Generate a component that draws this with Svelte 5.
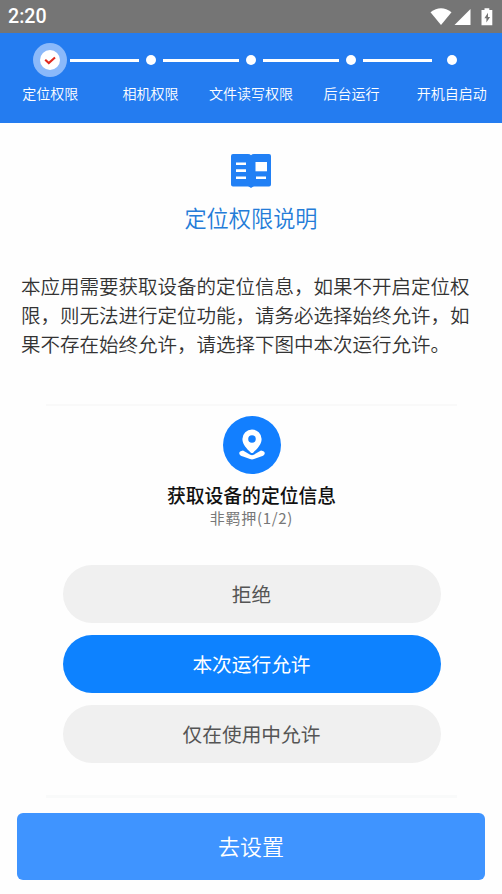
<script>
  const steps = ['定位权限', '相机权限', '文件读写权限', '后台运行', '开机自启动'];
  const choices = ['拒绝', '本次运行允许', '仅在使用中允许'];

  let current = 0;
  let recommended = 1;
</script>

<div class="screen">
  <div class="status-bar">
    <span class="clock">2:20</span>
    <svg class="status-icons" width="66" height="20" viewBox="0 0 66 20">
      <path d="M0.5 4.2Q11 -3.8 21.5 4.2L11 17Z" fill="#fff" />
      <path d="M40.5 1V17H24.5Z" fill="#fff" />
      <path d="M54.5 0.2h4.8v1.7h3v15.3H51.5V1.9h3z" fill="#fff" />
      <path d="M58 4.8l-3.6 5.5h2v4.3l3.7-5.7h-2.1z" fill="#757575" />
    </svg>
  </div>

  <div class="steps">
    {#each steps as step, i}
      <div class="step">
        <div class="track">
          <span class="line" class:hidden={i === 0}></span>
          <span class="marker" class:end={i === 0 || i === steps.length - 1}>
            {#if i === current}
              <svg class="current" width="34" height="34" viewBox="0 0 34 34">
                <circle cx="17" cy="17" r="17" fill="#8bb9fa" />
                <circle cx="17" cy="17" r="10" fill="#fff" />
                <path d="M12.2 16.7l3.6 3.4 6.2-5.6" fill="none" stroke="#e02b20" stroke-width="2.1" />
              </svg>
            {:else}
              <span class="dot"></span>
            {/if}
          </span>
          <span class="line" class:hidden={i === steps.length - 1}></span>
        </div>
        <div class="step-label">{step}</div>
      </div>
    {/each}
  </div>

  <main>
    <svg class="book" width="40" height="36" viewBox="0 0 40 36">
      <path d="M2 1H17Q19 1 20 2.3Q21 1 23 1H38Q40 1 40 3V31.5Q40 33.5 38 33.5H23Q21.5 33.5 20 35Q18.5 33.5 17 33.5H2Q0 33.5 0 31.5V3Q0 1 2 1Z" fill="#2180f5" />
      <path d="M5 10.7h10M5 17.6h10M5 24.8h10M25 24.8h10" stroke="#fff" stroke-width="2.6" />
      <rect x="24.5" y="9" width="11.5" height="9.3" fill="#fff" />
    </svg>
    <h1>定位权限说明</h1>
    <p class="description">本应用需要获取设备的定位信息，如果不开启定位权限，则无法进行定位功能，请务必选择始终允许，如果不存在始终允许，请选择下图中本次运行允许。</p>

    <div class="sample">
      <svg class="pin" width="58" height="58" viewBox="0 0 58 58">
        <circle cx="29" cy="29" r="29" fill="#127fff" />
        <path d="M20 34.5C14.5 35.3 15.5 39.5 20 40.5L27 43Q29 43.8 31 43L38 40.5C42.5 39.5 43.5 35.3 38 34.5L30.8 38.7Q29 39.6 27.2 38.7Z" fill="#fff" />
        <path fill-rule="evenodd" d="M29 13.5A9.6 9.6 0 0 0 19.4 23C19.4 28.5 24 33 27.6 36.4Q29 37.6 30.4 36.4C34 33 38.6 28.5 38.6 23A9.6 9.6 0 0 0 29 13.5ZM29 19.2a3.8 3.8 0 1 1 0 7.6a3.8 3.8 0 1 1 0-7.6Z" fill="#fff" />
      </svg>
      <h2>获取设备的定位信息</h2>
      <div class="app-name">非羁押(1/2)</div>
      <div class="choices">
        {#each choices as choice, i}
          <div class="choice" class:active={i === recommended}>{choice}</div>
        {/each}
      </div>
    </div>

    <button>去设置</button>
  </main>
</div>

<style>
  :global(body) { background: #fff; }
  .screen { height: 894px; overflow: hidden; display: flex; flex-direction: column; background: #fefefe; font-family: 'Noto Sans CJK SC', sans-serif; font-weight: 350; }

  .status-bar { height: 33px; flex-shrink: 0; box-sizing: border-box; padding: 0 6px 0 8px; display: flex; align-items: center; justify-content: space-between; background: #757575; }
  .clock { font: 500 19.6px/34px Roboto, sans-serif; color: #fff; }
  .status-icons { margin-top: 2px; }

  .steps { height: 90px; flex-shrink: 0; display: flex; background: #247cf0; }
  .step { flex: 1 1 0; min-width: 0; }
  .track { height: 34px; margin-top: 10px; display: flex; align-items: center; }
  .line { flex: 1; height: 3px; background: #fff; }
  .line.hidden { visibility: hidden; }
  .marker { width: 24px; flex-shrink: 0; display: flex; justify-content: center; }
  .marker.end { width: 40px; }
  .dot { width: 10px; height: 10px; border-radius: 50%; background: #fff; }
  .step-label { margin-top: 6px; font-size: 14px; line-height: 20px; text-align: center; white-space: nowrap; color: #fff; }

  main { flex: 1; display: flex; flex-direction: column; align-items: center; }
  .book { margin-top: 30px; }
  h1 { margin: 12px 0 0; font-size: 22.2px; line-height: 32px; font-weight: 350; color: #247cd8; }
  .description { width: 460px; margin: 38px 0 0; font-size: 19.5px; line-height: 29px; color: #333; }

  .sample { width: 411px; height: 394px; margin: 46px 0 0 1px; box-sizing: border-box; border-top: 2px solid #f9f9f9; border-bottom: 3px solid #f9fafa; display: flex; flex-direction: column; align-items: center; }
  .pin { margin-top: 10px; flex-shrink: 0; }
  h2 { margin: 7px 0 0; font-size: 18.8px; line-height: 28px; font-weight: 500; color: #111; }
  .app-name { margin-top: -1px; font-size: 15px; line-height: 20px; letter-spacing: 0.7px; font-weight: 400; color: #777; }
  .choices { width: 378px; margin-top: 37px; display: flex; flex-direction: column; gap: 12px; }
  .choice { height: 58px; border-radius: 29px; font-size: 19.7px; line-height: 58px; font-weight: 400; text-align: center; background: #f0f0f0; color: #555; }
  .choice.active { background: #0d82ff; color: #fff; }

  button { width: 468px; height: 67px; margin-top: 15px; padding: 0 0 3px; border: none; border-radius: 6px; font-family: inherit; font-size: 22px; font-weight: 350; color: #fff; background: #3f94ff; }
</style>
